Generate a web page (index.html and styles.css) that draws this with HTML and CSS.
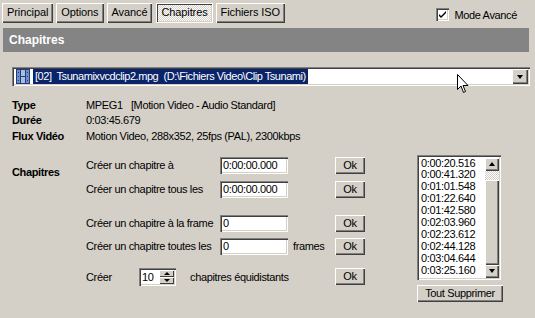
FILE: index.html
```html
<!DOCTYPE html>
<html>
<head>
    <title>Chapitres</title>
    <meta charset="UTF-8">
    <link rel="stylesheet" href="styles.css">
</head>
<body>
    <div class="window">
        <div class="topbar">
            <div class="tabs">
                <div class="tab">Principal</div>
                <div class="tab">Options</div>
                <div class="tab">Avancé</div>
                <div class="tab tab-active">Chapitres</div>
                <div class="tab">Fichiers ISO</div>
            </div>
            <label class="check">
                <span class="check-box">
                    <svg width="7" height="7" viewBox="0 0 7 7"><path d="M0 3 L2 5 L7 0 L7 2 L2 7 L0 5 Z" fill="#000"/></svg>
                </span>
                Mode Avancé
            </label>
        </div>

        <div class="header">Chapitres</div>

        <div class="combo">
            <div class="combo-field">
                <svg class="file-icon" width="14" height="15" viewBox="0 0 14 15">
                    <rect x="0" y="0" width="14" height="15" fill="#1f3d7a"/>
                    <rect x="1" y="1" width="3" height="13" fill="#6f8fc8"/>
                    <rect x="10" y="1" width="3" height="13" fill="#6f8fc8"/>
                    <rect x="5" y="1" width="4" height="6" fill="#a9bde3"/>
                    <rect x="5" y="8" width="4" height="6" fill="#a9bde3"/>
                    <rect x="2" y="3" width="1" height="1" fill="#1f3d7a"/>
                    <rect x="2" y="7" width="1" height="1" fill="#1f3d7a"/>
                    <rect x="2" y="11" width="1" height="1" fill="#1f3d7a"/>
                    <rect x="11" y="3" width="1" height="1" fill="#1f3d7a"/>
                    <rect x="11" y="7" width="1" height="1" fill="#1f3d7a"/>
                    <rect x="11" y="11" width="1" height="1" fill="#1f3d7a"/>
                </svg>
                <span class="combo-text">[02]&nbsp; Tsunamixvcdclip2.mpg&nbsp; (D:\Fichiers Video\Clip Tsunami)</span>
            </div>
            <div class="combo-btn"><span class="arrow-down"></span></div>
        </div>

        <div class="info">
            <div class="info-label">Type</div>
            <div>MPEG1&nbsp;&nbsp; [Motion Video - Audio Standard]</div>
            <div class="info-label">Durée</div>
            <div>0:03:45.679</div>
            <div class="info-label">Flux Vidéo</div>
            <div>Motion Video, 288x352, 25fps (PAL), 2300kbps</div>
        </div>

        <div class="chapters">
            <div class="chapters-title">Chapitres</div>
            <div class="chapters-form">
                <div class="row">
                    <span class="row-label">Créer un chapitre à</span>
                    <span class="field">0:00:00.000</span>
                    <span class="unit"></span>
                    <span class="btn btn-ok">Ok</span>
                </div>
                <div class="row row-2">
                    <span class="row-label">Créer un chapitre tous les</span>
                    <span class="field">0:00:00.000</span>
                    <span class="unit"></span>
                    <span class="btn btn-ok">Ok</span>
                </div>
                <div class="row row-3">
                    <span class="row-label">Créer un chapitre à la frame</span>
                    <span class="field">0</span>
                    <span class="unit"></span>
                    <span class="btn btn-ok">Ok</span>
                </div>
                <div class="row row-4">
                    <span class="row-label">Créer un chapitre toutes les</span>
                    <span class="field">0</span>
                    <span class="unit">frames</span>
                    <span class="btn btn-ok">Ok</span>
                </div>
                <div class="row row-5">
                    <span class="create-label">Créer</span>
                    <span class="spinner">
                        <span class="spin-value">10</span>
                        <span class="spin-btns">
                            <span class="spin-btn"><span class="arrow-up"></span></span>
                            <span class="spin-btn"><span class="arrow-down"></span></span>
                        </span>
                    </span>
                    <span class="spin-text">chapitres équidistants</span>
                    <span class="btn btn-ok">Ok</span>
                </div>
            </div>
            <div class="chapters-list">
                <div class="listbox">
                    <div class="list-items">
                        <div>0:00:20.516</div>
                        <div>0:00:41.320</div>
                        <div>0:01:01.548</div>
                        <div>0:01:22.640</div>
                        <div>0:01:42.580</div>
                        <div>0:02:03.960</div>
                        <div>0:02:23.612</div>
                        <div>0:02:44.128</div>
                        <div>0:03:04.644</div>
                        <div>0:03:25.160</div>
                    </div>
                    <div class="scrollbar">
                        <div class="sb-btn"><span class="arrow-up"></span></div>
                        <div class="sb-track"></div>
                        <div class="sb-thumb"></div>
                        <div class="sb-btn"><span class="arrow-down"></span></div>
                    </div>
                </div>
                <div class="btn btn-wide">Tout Supprimer</div>
            </div>
        </div>

        <svg class="cursor" width="12" height="20" viewBox="0 0 12 20">
            <path d="M0.5 0.5 L0.5 15.5 L4 12 L6.5 18.5 L8.5 17.5 L6 11.5 L11 11.5 Z" fill="#fff" stroke="#000" stroke-width="1"/>
        </svg>
    </div>
</body>
</html>
```

FILE: styles.css
```css
body {
    margin: 0;
    background-color: #d4d0c8;
    font-family: "Liberation Sans", Arial, sans-serif;
    font-size: 11px;
    letter-spacing: -0.35px;
    color: #000;
}
.window {
    position: relative;
    width: 535px;
    height: 318px;
    overflow: hidden;
    white-space: nowrap;
}
.topbar {
    display: flex;
    justify-content: space-between;
    align-items: flex-start;
    padding: 3px 0 0 2px;
}
.tabs {
    display: flex;
    gap: 3px;
}
.tab {
    height: 20px;
    line-height: 19px;
    padding: 0 5px;
    letter-spacing: -0.1px;
    background-color: #d4d0c8;
    box-shadow: inset 1px 1px 0 #fff, inset -1px -1px 0 #404040, inset -2px -2px 0 #808080;
}
.tab-active {
    box-shadow: inset 1px 1px 0 #fff, inset -1px -1px 0 #fff, inset 2px 2px 0 #404040, inset -2px -2px 0 #d4d0c8;
    background-image: repeating-conic-gradient(#fff 0 25%, #d4d0c8 0 50%);
    background-size: 2px 2px;
    margin-left: 1px;
}
.check {
    display: flex;
    align-items: center;
    gap: 5px;
    margin: 5px 18px 0 0;
}
.check-box {
    width: 13px;
    height: 13px;
    box-sizing: border-box;
    background: #fff;
    display: flex;
    align-items: center;
    justify-content: center;
    box-shadow: inset 1px 1px 0 #808080, inset 2px 2px 0 #404040, inset -1px -1px 0 #fff, inset -2px -2px 0 #d4d0c8;
}
.header {
    margin: 5px 6px 0 3px;
    height: 24px;
    line-height: 24px;
    padding-left: 6px;
    background-color: #848484;
    color: #fff;
    font-weight: bold;
    font-size: 12px;
    letter-spacing: 0;
}
.combo {
    display: flex;
    margin: 15px 5px 0 12px;
    height: 19px;
    background: #fff;
    box-shadow: inset 1px 1px 0 #808080, inset 2px 2px 0 #404040, inset -1px -1px 0 #fff, inset -2px -2px 0 #d4d0c8;
    padding: 2px;
    box-sizing: border-box;
}
.combo-field {
    flex: 1;
    display: flex;
    align-items: center;
    gap: 3px;
    padding-left: 2px;
}
.file-icon {
    display: block;
}
.combo-text {
    background-color: #0a246a;
    color: #fff;
    line-height: 15px;
    padding: 0 2px;
    font-size: 11px;
    letter-spacing: -0.45px;
}
.combo-btn {
    width: 16px;
    background: #d4d0c8;
    display: flex;
    align-items: center;
    justify-content: center;
    box-shadow: inset 1px 1px 0 #fff, inset -1px -1px 0 #404040, inset -2px -2px 0 #808080;
}
.arrow-down {
    width: 0;
    height: 0;
    border-left: 3.5px solid transparent;
    border-right: 3.5px solid transparent;
    border-top: 4px solid #000;
}
.arrow-up {
    width: 0;
    height: 0;
    border-left: 3.5px solid transparent;
    border-right: 3.5px solid transparent;
    border-bottom: 4px solid #000;
}
.info {
    display: grid;
    grid-template-columns: 74px auto;
    grid-auto-rows: 15.5px;
    align-items: center;
    margin: 11px 0 0 12px;
}
.info-label {
    font-weight: bold;
}
.chapters {
    display: flex;
    margin: 11px 0 0 12px;
}
.chapters-title {
    width: 74px;
    font-weight: bold;
    margin-top: 11px;
}
.chapters-form {
    width: 279px;
    padding-top: 2px;
}
.row {
    display: flex;
    align-items: center;
    height: 17px;
}
.row-2 {
    margin-top: 7px;
}
.row-3 {
    margin-top: 17px;
}
.row-4 {
    margin-top: 6px;
}
.row-5 {
    margin-top: 13px;
    height: 18px;
}
.row-label {
    width: 134px;
}
.field {
    width: 68px;
    height: 17px;
    box-sizing: border-box;
    background: #fff;
    padding: 2px 0 0 3px;
    line-height: 13px;
    box-shadow: inset 1px 1px 0 #808080, inset 2px 2px 0 #404040, inset -1px -1px 0 #fff, inset -2px -2px 0 #d4d0c8;
}
.unit {
    width: 47px;
    padding-left: 5px;
    box-sizing: border-box;
}
.btn {
    background: #d4d0c8;
    text-align: center;
    box-shadow: inset 1px 1px 0 #fff, inset -1px -1px 0 #404040, inset -2px -2px 0 #808080;
}
.btn-ok {
    width: 30px;
    height: 17px;
    line-height: 17px;
}
.create-label {
    width: 53px;
}
.spinner {
    display: flex;
    width: 37px;
    height: 18px;
    box-sizing: border-box;
    background: #fff;
    padding: 2px;
    box-shadow: inset 1px 1px 0 #808080, inset 2px 2px 0 #404040, inset -1px -1px 0 #fff, inset -2px -2px 0 #d4d0c8;
}
.spin-value {
    flex: 1;
    padding-left: 1px;
    line-height: 14px;
}
.spin-btns {
    display: flex;
    flex-direction: column;
    width: 15px;
}
.spin-btn {
    flex: 1;
    display: flex;
    align-items: center;
    justify-content: center;
    background: #d4d0c8;
    box-shadow: inset 1px 1px 0 #fff, inset -1px -1px 0 #404040;
}
.spin-btn .arrow-up,
.spin-btn .arrow-down {
    border-left-width: 3px;
    border-right-width: 3px;
    border-top-width: 3px;
    border-bottom-width: 3px;
}
.spin-text {
    width: 159px;
    padding-left: 14px;
    box-sizing: border-box;
}
.chapters-list {
    margin-left: 52px;
    display: flex;
    flex-direction: column;
    align-items: flex-start;
}
.listbox {
    display: flex;
    width: 84px;
    height: 125px;
    box-sizing: border-box;
    padding: 2px;
    background: #fff;
    box-shadow: inset 1px 1px 0 #808080, inset 2px 2px 0 #404040, inset -1px -1px 0 #fff, inset -2px -2px 0 #d4d0c8;
}
.list-items {
    flex: 1;
    padding: 1px 0 0 2px;
    line-height: 11.9px;
    font-size: 11px;
}
.scrollbar {
    width: 14px;
    display: flex;
    flex-direction: column;
    margin-top: 1px;
}
.sb-btn {
    height: 13px;
    display: flex;
    align-items: center;
    justify-content: center;
    background: #d4d0c8;
    box-shadow: inset 1px 1px 0 #fff, inset -1px -1px 0 #404040, inset -2px -2px 0 #808080;
}
.sb-track {
    height: 9px;
    background-image: repeating-conic-gradient(#fff 0 25%, #d4d0c8 0 50%);
    background-size: 2px 2px;
}
.sb-thumb {
    flex: 1;
    background: #d4d0c8;
    box-shadow: inset 1px 1px 0 #fff, inset -1px -1px 0 #404040, inset -2px -2px 0 #808080;
}
.btn-wide {
    margin-top: 5px;
    width: 86px;
    height: 17px;
    line-height: 17px;
}
.cursor {
    position: absolute;
    left: 457px;
    top: 74px;
}
```
